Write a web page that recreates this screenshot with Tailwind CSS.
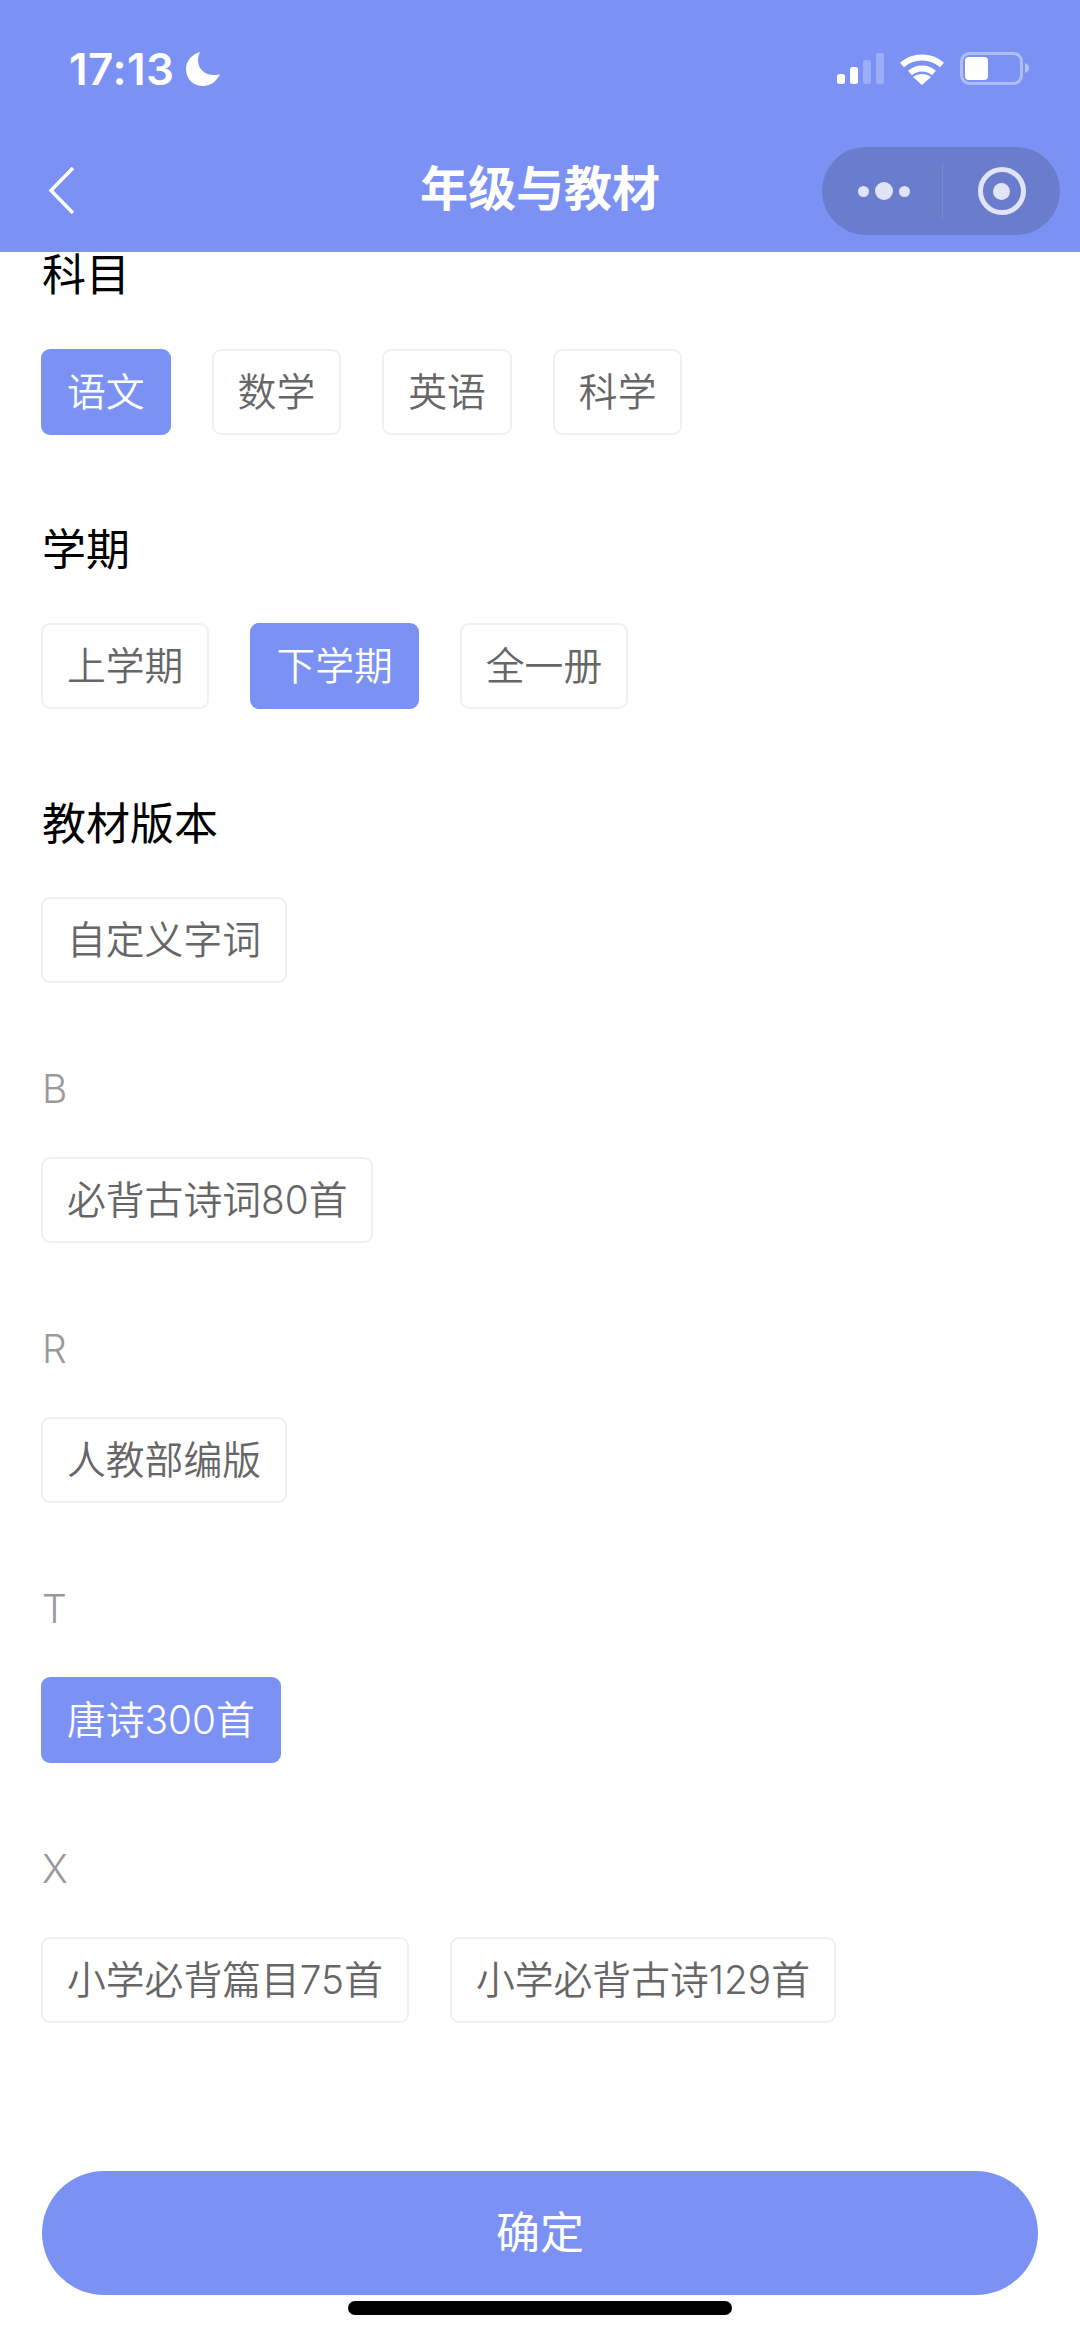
<!DOCTYPE html>
<html lang="zh-CN">

<head>
  <meta charset="UTF-8">
  <meta name="viewport" content="width=device-width, initial-scale=1.0">
  <title>年级与教材</title>
  <script src="https://cdn.jsdelivr.net/npm/@tailwindcss/browser@4"></script>
</head>

<body class="bg-white w-[1080px] h-[2337px] overflow-hidden relative font-['Inter','Noto_Sans_CJK_SC',sans-serif]">

  <!-- Header -->
  <header class="h-[252px] bg-[#7b92f4] relative z-10">
    <!-- Status bar -->
    <div class="h-[138px] flex justify-between pl-[69px] pr-[51px] pt-[44px]">
      <div class="flex items-start gap-[11px] text-white">
        <span class="text-[44px] leading-[50px] font-semibold tracking-[0.5px]">17:13</span>
        <svg class="mt-[8px]" width="34" height="34" viewBox="0 0 34 34"><path fill="#fff" d="M14 0C6 2 0 9 0 17c0 10 7 17 17 17 8 0 14-5 17-12-2 1-4 1-6 1-9 0-16-6-16-15 0-3 1-6 2-8z" /></svg>
      </div>
      <div class="flex items-start gap-[16px] pt-[8px]">
        <svg width="47" height="34" viewBox="1 0 47 34">
          <rect x="1" y="22" width="8" height="10" rx="2.500" fill="#fff" />
          <rect x="14" y="15" width="8" height="17" rx="2.500" fill="#fff" />
          <rect x="27" y="8" width="8" height="24" rx="2.500" fill="#fff" fill-opacity=".25" />
          <rect x="40" y="1" width="8" height="31" rx="2.500" fill="#fff" fill-opacity=".25" />
        </svg>
        <svg width="44" height="34" viewBox="1 0 44 34" fill="none" stroke="#fff" stroke-width="6">
          <path d="M3 13c11-10 29-10 40 0" />
          <path d="M11 21c7-6 17-6 24 0" />
          <path fill="#fff" stroke="none" d="M23 33l-9-8c5-4 13-4 18 0z" />
        </svg>
        <svg width="69" height="34" viewBox="0 0 69 34">
          <rect x="1.500" y="1.500" width="60" height="30" rx="8" fill="none" stroke="#fff" stroke-opacity=".4" stroke-width="3" />
          <rect x="5" y="5" width="23" height="23" rx="4" fill="#fff" />
          <path d="M65 11c3 1 4 3 4 5s-1 4-4 5z" fill="#fff" fill-opacity=".45" />
        </svg>
      </div>
    </div>
    <!-- Nav bar -->
    <div class="h-[114px] relative flex items-center justify-center">
      <svg class="absolute left-[46px] top-[28px]" width="30" height="48" viewBox="0 0 30 48" fill="none" stroke="#fff" stroke-width="3.500"><path d="M27 2L5 24.500l22 22.500" /></svg>
      <h1 class="text-[48px] font-semibold text-white -mt-[12px]">年级与教材</h1>
      <!-- Capsule -->
      <div class="absolute left-[822px] top-[9px] w-[238px] h-[88px] rounded-full bg-[#6a7dcd] flex items-center">
        <div class="w-[120px] flex items-center justify-center gap-[6px] pl-[3px]">
          <span class="w-[11px] h-[11px] rounded-full bg-[#e0e4f6]"></span>
          <span class="w-[18px] h-[18px] rounded-full bg-[#e0e4f6]"></span>
          <span class="w-[11px] h-[11px] rounded-full bg-[#e0e4f6]"></span>
        </div>
        <div class="w-px h-[55px] bg-white/10"></div>
        <div class="flex-1 flex items-center justify-center">
          <div class="w-[48px] h-[48px] rounded-full border-[5px] border-[#e0e4f6] flex items-center justify-center">
            <span class="w-[17px] h-[17px] rounded-full bg-[#e0e4f6]"></span>
          </div>
        </div>
      </div>
    </div>
  </header>

  <!-- Content -->
  <main class="px-[41px] pt-[1px] text-[38.800px] font-[350]">
    <h2 class="text-[44px] leading-[44px] pl-px font-normal text-black">科目</h2>
    <div class="flex gap-[41px] mt-[52px]">
      <button class="h-[86px] px-[26px] rounded-[9px] bg-[#7b92f4] text-white">语文</button>
      <button class="h-[86px] px-[24px] rounded-[9px] border-2 border-[#f0f0f0] text-[#666666]">数学</button>
      <button class="h-[86px] px-[24px] rounded-[9px] border-2 border-[#f0f0f0] text-[#666666]">英语</button>
      <button class="h-[86px] px-[24px] rounded-[9px] border-2 border-[#f0f0f0] text-[#666666]">科学</button>
    </div>

    <h2 class="text-[44px] leading-[44px] pl-px font-normal text-black mt-[93px]">学期</h2>
    <div class="flex gap-[41px] mt-[51px]">
      <button class="h-[86px] px-[24px] rounded-[9px] border-2 border-[#f0f0f0] text-[#666666]">上学期</button>
      <button class="h-[86px] px-[26px] rounded-[9px] bg-[#7b92f4] text-white">下学期</button>
      <button class="h-[86px] px-[24px] rounded-[9px] border-2 border-[#f0f0f0] text-[#666666]">全一册</button>
    </div>

    <h2 class="text-[44px] leading-[44px] pl-px font-normal text-black mt-[93px]">教材版本</h2>
    <div class="flex gap-[41px] mt-[51px]">
      <button class="h-[86px] px-[24px] rounded-[9px] border-2 border-[#f0f0f0] text-[#666666]">自定义字词</button>
    </div>

    <h3 class="text-[39px] leading-[44px] pl-px font-light text-[#999999] mt-[84px]">B</h3>
    <div class="flex gap-[41px] mt-[46px]">
      <button class="h-[86px] px-[24px] rounded-[9px] border-2 border-[#f0f0f0] text-[#666666]">必背古诗词80首</button>
    </div>

    <h3 class="text-[39px] leading-[44px] pl-px font-light text-[#999999] mt-[84px]">R</h3>
    <div class="flex gap-[41px] mt-[46px]">
      <button class="h-[86px] px-[24px] rounded-[9px] border-2 border-[#f0f0f0] text-[#666666]">人教部编版</button>
    </div>

    <h3 class="text-[39px] leading-[44px] pl-px font-light text-[#999999] mt-[84px]">T</h3>
    <div class="flex gap-[41px] mt-[46px]">
      <button class="h-[86px] px-[26px] rounded-[9px] bg-[#7b92f4] text-white">唐诗300首</button>
    </div>

    <h3 class="text-[39px] leading-[44px] pl-px font-light text-[#999999] mt-[84px]">X</h3>
    <div class="flex gap-[41px] mt-[46px]">
      <button class="h-[86px] px-[24px] rounded-[9px] border-2 border-[#f0f0f0] text-[#666666]">小学必背篇目75首</button>
      <button class="h-[86px] px-[24px] rounded-[9px] border-2 border-[#f0f0f0] text-[#666666]">小学必背古诗129首</button>
    </div>
  </main>

  <!-- Footer button -->
  <button class="absolute left-[42px] top-[2171px] w-[996px] h-[124px] rounded-full bg-[#7b92f4] text-white text-[44px]">确定</button>
  <div class="absolute left-[348px] top-[2301px] w-[384px] h-[14px] rounded-full bg-black"></div>
</body>

</html>
